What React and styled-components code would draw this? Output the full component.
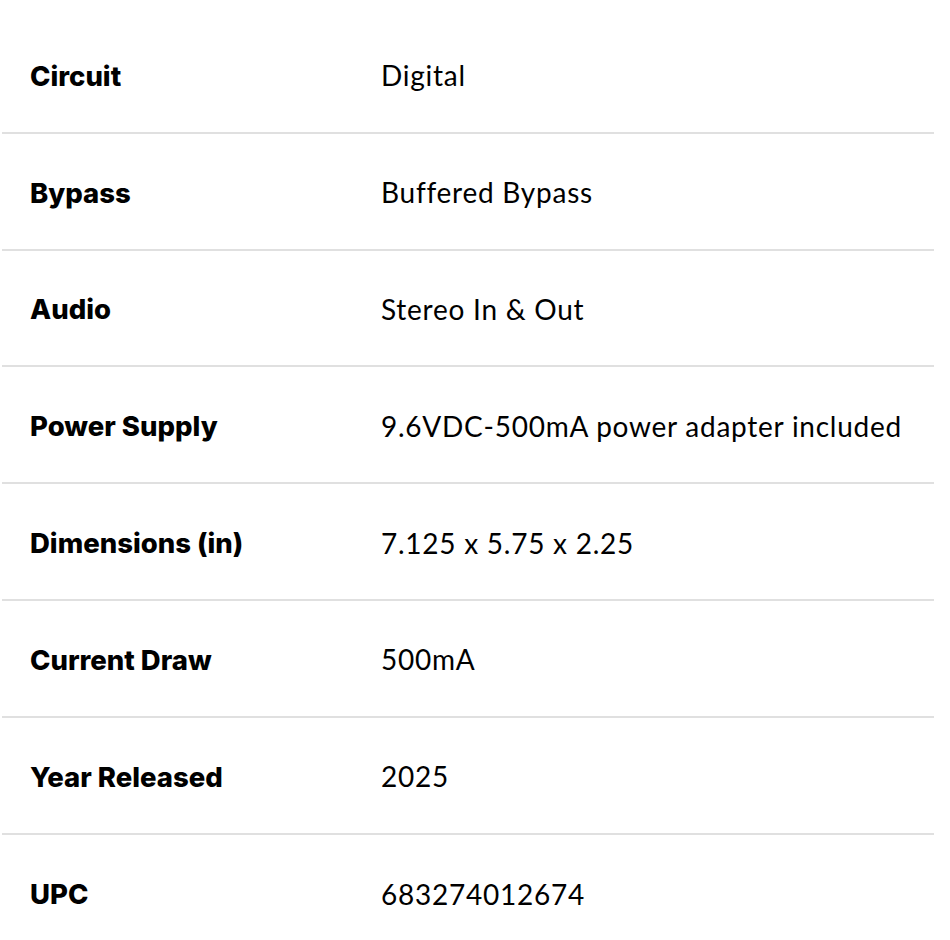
import React from 'react';
import styled, { createGlobalStyle } from 'styled-components';

const GlobalStyle = createGlobalStyle`
  body {
    margin: 0;
    background: #fff;
    color: #000;
  }
`;

const SpecTable = styled.div`
  width: 932px;
  margin-left: 2px;
  padding-top: 17px;
`;

const SpecRow = styled.div`
  display: grid;
  grid-template-columns: 351px 1fr;
  align-items: center;
  height: 116.8px;
  box-sizing: border-box;
  padding: 0 28px 0 28px;
  border-bottom: ${(p) => (p.last ? 'none' : '2px solid #e0e0e0')};
`;

const Label = styled.div`
  font-family: Inter, "Liberation Sans", sans-serif;
  font-weight: 800;
  font-size: 27.5px;
  padding-top: 3px;
`;

const Value = styled.div`
  font-family: Lato, "Noto Sans", sans-serif;
  font-weight: 400;
  font-size: 28px;
  letter-spacing: 0.75px;
  padding-top: 2px;
`;

const specs = [
  ['Circuit', 'Digital'],
  ['Bypass', 'Buffered Bypass'],
  ['Audio', 'Stereo In & Out'],
  ['Power Supply', '9.6VDC-500mA power adapter included'],
  ['Dimensions (in)', '7.125 x 5.75 x 2.25'],
  ['Current Draw', '500mA'],
  ['Year Released', '2025'],
  ['UPC', '683274012674'],
];

export default function App() {
  return (
    <>
      <GlobalStyle />
      <SpecTable>
        {specs.map(([k, v], i) => (
          <SpecRow key={k} last={i === specs.length - 1}>
            <Label>{k}</Label>
            <Value>{v}</Value>
          </SpecRow>
        ))}
      </SpecTable>
    </>
  );
}
